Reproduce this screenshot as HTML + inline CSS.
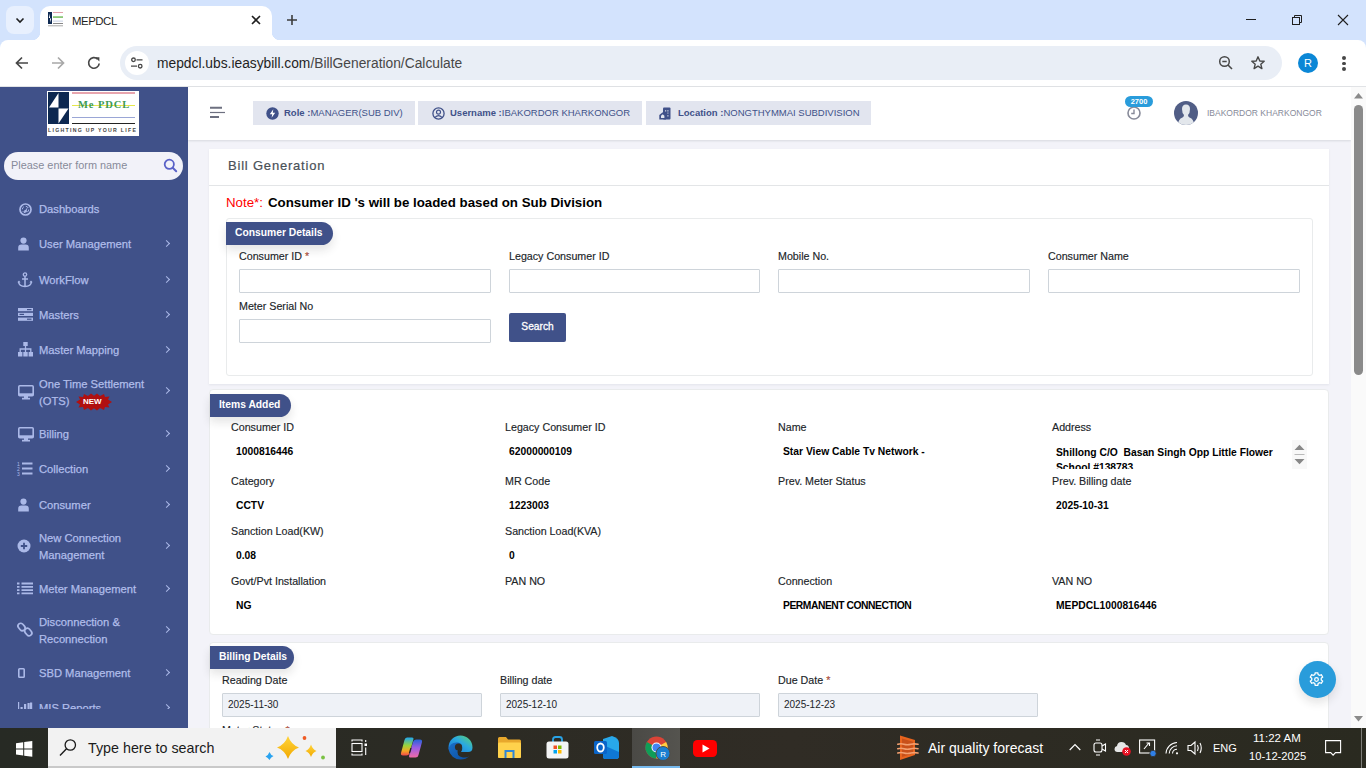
<!DOCTYPE html>
<html><head><meta charset="utf-8">
<style>
*{box-sizing:border-box;margin:0;padding:0}
html,body{width:1366px;height:768px;overflow:hidden;font-family:"Liberation Sans",sans-serif;background:#f3f3f9;position:relative}
.a{position:absolute;white-space:nowrap}
svg{position:absolute;overflow:visible}
#tabstrip{position:absolute;left:0;top:0;width:1366px;height:56px;background:#d3e3fd}
#toolbar{position:absolute;left:0;top:40px;width:1366px;height:46px;background:#fff}
#sep{position:absolute;left:0;top:86px;width:1366px;height:1px;background:#e1e3e6}
#sidebar{position:absolute;left:0;top:87px;width:188px;height:641px;background:#405189;overflow:hidden}
#header{position:absolute;left:188px;top:87px;width:1163px;height:53px;background:#fff;box-shadow:0 1px 2px rgba(56,65,74,.15)}
#vscroll{position:absolute;left:1351px;top:87px;width:15px;height:641px;background:#fafafa}
#taskbar{position:absolute;left:0;top:728px;width:1366px;height:40px;background:linear-gradient(90deg,#272a24 0%,#2c2b24 35%,#302c25 58%,#2d2b23 75%,#2a2a20 100%)}
/* sidebar */
.mi{position:absolute;left:39px;color:#b0bdea;font-size:11.2px;line-height:17px;white-space:nowrap;margin-top:1px;-webkit-text-stroke:0.25px #b0bdea}
.chev{position:absolute;left:164px;width:5px;height:5px;border-right:1.3px solid #abb9e8;border-top:1.3px solid #abb9e8;transform:rotate(45deg)}
/* header pills */
.pill{position:absolute;top:101px;height:24px;background:#e2e5ef}
.pill span{position:absolute;top:6px;font-size:9.5px;line-height:12px;color:#405189;white-space:nowrap}
/* cards */
.card{position:absolute;background:#fff;box-shadow:0 1px 2px rgba(56,65,74,.08)}
.badge{position:absolute;height:23px;background:#405189;border-radius:0 12px 12px 0;box-shadow:0 5px 10px rgba(30,32,37,.12);color:#fff;font-weight:bold;font-size:10.3px;line-height:21px;padding-left:9px;white-space:nowrap}
.lbl{position:absolute;font-size:10.7px;line-height:13px;color:#212529;white-space:nowrap;-webkit-text-stroke:0.15px #212529;margin-top:0.5px}
.val{position:absolute;font-size:10.3px;line-height:13px;color:#000;font-weight:bold;white-space:nowrap}
.inp{position:absolute;height:24px;border:1px solid #ced4da;background:#fff;border-radius:1px}
.inp.ro{background:#eff2f7}
.inp span{position:absolute;left:5px;top:5px;font-size:10px;line-height:12px;color:#212529}
.req{color:#f06548}
</style></head>
<body>
<!-- ============ CHROME ============ -->
<div id="tabstrip"></div>
<div class="a" style="left:6px;top:6px;width:28px;height:28px;border-radius:8px;background:#e8f0fe"></div>
<svg style="left:14px;top:14px" width="12" height="12" viewBox="0 0 12 12"><path d="M2.5 4.5 L6 8 L9.5 4.5" fill="none" stroke="#1f1f1f" stroke-width="1.6"/></svg>
<!-- tab -->
<div class="a" style="left:40px;top:6px;width:232px;height:40px;background:#fff;border-radius:10px 10px 0 0"></div>
<div class="a" style="left:32px;top:32px;width:8px;height:8px;background:radial-gradient(circle at 0 0,#d3e3fd 8px,#fff 8.5px)"></div>
<div class="a" style="left:272px;top:32px;width:8px;height:8px;background:radial-gradient(circle at 100% 0,#d3e3fd 8px,#fff 8.5px)"></div>
<!-- favicon -->
<svg style="left:48px;top:12px" width="16" height="15" viewBox="0 0 16 15"><rect x="0" y="0" width="4" height="12" fill="#0f2a52"/><path d="M2 1.5 L2 6 L0.8 6 Z M2 6.5 L3.2 6.5 L2 10.5 Z" fill="#fff"/><rect x="5" y="0" width="10" height="1" fill="#e3a0aa"/><rect x="5" y="4.2" width="10" height="1.8" fill="#8cc878"/><rect x="5" y="8.5" width="10" height="1.3" fill="#d5dcec"/><rect x="5" y="11" width="10" height="1" fill="#888"/><rect x="0" y="13.3" width="15" height="1" fill="#aaa"/></svg>
<div class="a" style="left:72px;top:12.5px;font-size:11.4px;line-height:16px;color:#1f1f1f;letter-spacing:-0.45px">MEPDCL</div>
<svg style="left:251px;top:15px" width="10" height="10" viewBox="0 0 10 10"><path d="M1 1 L9 9 M9 1 L1 9" stroke="#1f1f1f" stroke-width="1.6"/></svg>
<svg style="left:286px;top:14px" width="12" height="12" viewBox="0 0 12 12"><path d="M6 1 V11 M1 6 H11" stroke="#3c3c3c" stroke-width="1.6"/></svg>
<!-- window controls -->
<div class="a" style="left:1246px;top:19px;width:10px;height:1px;background:#1f1f1f"></div>
<svg style="left:1291px;top:14px" width="12" height="12" viewBox="0 0 12 12"><rect x="1.5" y="3.5" width="7" height="7" fill="none" stroke="#1f1f1f" stroke-width="1"/><path d="M3.5 3.5 V1.5 H10.5 V8.5 H8.5" fill="none" stroke="#1f1f1f" stroke-width="1"/></svg>
<svg style="left:1337px;top:14px" width="12" height="12" viewBox="0 0 12 12"><path d="M1 1 L11 11 M11 1 L1 11" stroke="#1f1f1f" stroke-width="1.1"/></svg>

<div id="toolbar" style="border-radius:8px 8px 0 0"></div>
<div id="sep"></div>
<!-- nav -->
<svg style="left:14px;top:55px" width="16" height="16" viewBox="0 0 16 16"><path d="M14 8 H2.5 M8 2.5 L2.5 8 L8 13.5" fill="none" stroke="#474747" stroke-width="1.7"/></svg>
<svg style="left:50px;top:55px" width="16" height="16" viewBox="0 0 16 16"><path d="M2 8 H13.5 M8 2.5 L13.5 8 L8 13.5" fill="none" stroke="#a8a8a8" stroke-width="1.7"/></svg>
<svg style="left:86px;top:55px" width="16" height="16" viewBox="0 0 16 16"><path d="M13.2 8.5 A5.3 5.3 0 1 1 11.6 4.1" fill="none" stroke="#474747" stroke-width="1.7"/><path d="M9.2 2.2 H13.4 V6.4 Z" fill="#474747"/></svg>
<!-- omnibox -->
<div class="a" style="left:120px;top:46px;width:1162px;height:34px;border-radius:17px;background:#e9eef6"></div>
<div class="a" style="left:125px;top:51px;width:24px;height:24px;border-radius:12px;background:#fff"></div>
<svg style="left:130px;top:56px" width="14" height="14" viewBox="0 0 14 14"><circle cx="3.5" cy="3.8" r="1.8" fill="none" stroke="#474747" stroke-width="1.3"/><path d="M6.5 3.8 H12.5 M1 10.2 H7" stroke="#474747" stroke-width="1.3"/><circle cx="10.2" cy="10.2" r="1.8" fill="none" stroke="#474747" stroke-width="1.3"/></svg>
<div class="a" style="left:157px;top:55px;font-size:13.8px;line-height:18px;color:#1f1f1f">mepdcl.ubs.ieasybill.com<span style="color:#474747">/BillGeneration/Calculate</span></div>
<svg style="left:1218px;top:55px" width="16" height="16" viewBox="0 0 16 16"><circle cx="6.5" cy="6.5" r="4.8" fill="none" stroke="#474747" stroke-width="1.5"/><path d="M4.3 6.5 H8.7 M10 10 L14 14" stroke="#474747" stroke-width="1.6"/></svg>
<svg style="left:1250px;top:55px" width="16" height="16" viewBox="0 0 16 16"><path d="M8 1.8 L9.8 6 L14.2 6.3 L10.8 9.2 L11.9 13.6 L8 11.2 L4.1 13.6 L5.2 9.2 L1.8 6.3 L6.2 6 Z" fill="none" stroke="#474747" stroke-width="1.4" stroke-linejoin="round"/></svg>
<div class="a" style="left:1298px;top:53px;width:20px;height:20px;border-radius:10px;background:#0b87d6;color:#fff;font-size:11px;line-height:20px;text-align:center">R</div>
<div class="a" style="left:1342px;top:56px;width:3.5px;height:3.5px;border-radius:2px;background:#474747"></div>
<div class="a" style="left:1342px;top:61.5px;width:3.5px;height:3.5px;border-radius:2px;background:#474747"></div>
<div class="a" style="left:1342px;top:67px;width:3.5px;height:3.5px;border-radius:2px;background:#474747"></div>

<!-- ============ SIDEBAR ============ -->
<div id="sidebar"></div>
<!-- logo -->
<div class="a" style="left:47px;top:91px;width:92px;height:45px;background:#fff"></div>
<svg style="left:48px;top:92px" width="22" height="33" viewBox="0 0 22 33"><rect x="0" y="0" width="21" height="32" fill="#0d2850"/><path d="M10.5 1 L10.5 15.5 L1 15.5 Z" fill="#fff"/><path d="M10.5 16.5 L20.5 16.5 L10.5 31.5 Z" fill="#fff"/></svg>
<div class="a" style="left:72px;top:92px;width:63px;height:1.5px;background:#e8a5ae"></div>
<div class="a" style="left:72px;top:104.5px;width:63px;height:1.2px;background:#e6e84a"></div>
<div class="a" style="left:78px;top:99px;font-family:'Liberation Serif',serif;font-weight:bold;font-size:10.5px;line-height:12px;color:#3d9a55;letter-spacing:0.9px">Me&nbsp;PDCL</div>
<div class="a" style="left:72px;top:116.5px;width:63px;height:1.2px;background:#9aa6d6"></div>
<div class="a" style="left:72px;top:123px;width:63px;height:1.3px;background:#222"></div>
<div class="a" style="left:48px;top:127px;font-size:5.2px;line-height:6px;color:#444;letter-spacing:1.28px;font-weight:bold">LIGHTING UP YOUR LIFE</div>
<!-- search -->
<div class="a" style="left:4px;top:152px;width:179px;height:28px;border-radius:14px;background:#f2f2f9"></div>
<div class="a" style="left:11px;top:159px;font-size:10.9px;line-height:13px;color:#878a99">Please enter form name</div>
<svg style="left:163px;top:158px" width="15" height="15" viewBox="0 0 15 15"><circle cx="6.3" cy="6.3" r="4.6" fill="none" stroke="#5a62c8" stroke-width="1.8"/><path d="M9.7 9.7 L13.2 13.2" stroke="#5a62c8" stroke-width="2" stroke-linecap="round"/></svg>
<!-- menu -->
<div class="mi" style="top:200px">Dashboards</div>
<div class="mi" style="top:235px">User Management</div><div class="chev" style="top:241px"></div>
<div class="mi" style="top:271px">WorkFlow</div><div class="chev" style="top:277px"></div>
<div class="mi" style="top:306px">Masters</div><div class="chev" style="top:312px"></div>
<div class="mi" style="top:341px">Master Mapping</div><div class="chev" style="top:347px"></div>
<div class="mi" style="top:375px">One Time Settlement</div>
<div class="mi" style="top:392px">(OTS)</div><div class="chev" style="top:388px"></div>
<div class="mi" style="top:425px">Billing</div><div class="chev" style="top:431px"></div>
<div class="mi" style="top:460px">Collection</div><div class="chev" style="top:466px"></div>
<div class="mi" style="top:496px">Consumer</div><div class="chev" style="top:502px"></div>
<div class="mi" style="top:529px">New Connection</div>
<div class="mi" style="top:546px">Management</div><div class="chev" style="top:543px"></div>
<div class="mi" style="top:580px">Meter Management</div><div class="chev" style="top:586px"></div>
<div class="mi" style="top:613px">Disconnection &amp;</div>
<div class="mi" style="top:630px">Reconnection</div><div class="chev" style="top:627px"></div>
<div class="mi" style="top:664px">SBD Management</div><div class="chev" style="top:670px"></div>
<div class="mi" style="top:699px">MIS Reports</div><div class="chev" style="top:705px"></div>
<!-- NEW badge -->
<svg style="left:75px;top:393px" width="38" height="18" viewBox="0 0 38 18"><path d="M1 9 L5 6.5 L3.5 3.5 L8 4 L9 1 L13 3 L16 0.5 L19 2.8 L22 0.5 L25 3 L29 1 L30 4 L34.5 3.5 L33 6.5 L37 9 L33 11.5 L34.5 14.5 L30 14 L29 17 L25 15 L22 17.5 L19 15.2 L16 17.5 L13 15 L9 17 L8 14 L3.5 14.5 L5 11.5 Z" fill="#b01010"/></svg>
<div class="a" style="left:83px;top:397px;font-size:8px;line-height:10px;color:#fff;font-weight:bold">NEW</div>
<!-- icons -->
<svg style="left:19px;top:203px" width="13" height="13" viewBox="0 0 13 13"><circle cx="6.5" cy="6.5" r="5.5" fill="none" stroke="#abb9e8" stroke-width="1.7"/><circle cx="6.5" cy="6.5" r="3.2" fill="none" stroke="#abb9e8" stroke-width="1" stroke-dasharray="3 2"/><path d="M5.6 8.2 L8.8 3.8 L7.4 8.6 Z" fill="#abb9e8"/><circle cx="6.4" cy="8.3" r="1.3" fill="#abb9e8"/></svg>
<svg style="left:18px;top:237px" width="11" height="14" viewBox="0 0 11 14"><circle cx="5.5" cy="3.6" r="3.1" fill="#abb9e8"/><path d="M0.2 13.6 V10.8 Q0.2 7.6 3.4 7.6 H7.6 Q10.8 7.6 10.8 10.8 V13.6 Z" fill="#abb9e8"/></svg>
<svg style="left:17px;top:272px" width="16" height="16" viewBox="0 0 16 16"><circle cx="8" cy="2.6" r="1.7" fill="none" stroke="#abb9e8" stroke-width="1.3"/><path d="M8 4.3 V14.5 M5 7 H11 M1.5 9.5 Q2 14.5 8 14.5 Q14 14.5 14.5 9.5" fill="none" stroke="#abb9e8" stroke-width="1.5"/><path d="M0.5 10.5 L2 8.5 L3.5 10.5 Z M12.5 10.5 L14 8.5 L15.5 10.5Z" fill="#abb9e8"/></svg>
<svg style="left:18px;top:308px" width="15" height="13" viewBox="0 0 15 13"><rect x="0" y="0" width="15" height="3.2" fill="#abb9e8"/><rect x="0" y="4.8" width="15" height="3.2" fill="#abb9e8"/><rect x="0" y="9.6" width="15" height="3.2" fill="#abb9e8"/><rect x="9" y="1" width="4.5" height="1.2" fill="#405189"/><rect x="1.5" y="5.8" width="4.5" height="1.2" fill="#405189"/><rect x="9" y="10.6" width="4.5" height="1.2" fill="#405189"/></svg>
<svg style="left:18px;top:342px" width="15" height="15" viewBox="0 0 15 15"><rect x="5.3" y="0" width="4.4" height="4" fill="#abb9e8"/><path d="M7.5 4 V7 M2.2 10 V7 H12.8 V10 M7.5 7 V10" fill="none" stroke="#abb9e8" stroke-width="1.3"/><rect x="0" y="10" width="4.4" height="4.5" fill="#abb9e8"/><rect x="5.3" y="10" width="4.4" height="4.5" fill="#abb9e8"/><rect x="10.6" y="10" width="4.4" height="4.5" fill="#abb9e8"/></svg>
<svg style="left:18px;top:385px" width="16" height="15" viewBox="0 0 16 15"><rect x="0.8" y="0.8" width="14.4" height="10" rx="1" fill="none" stroke="#abb9e8" stroke-width="1.6"/><rect x="0.8" y="8.3" width="14.4" height="2.5" fill="#abb9e8"/><rect x="6" y="11" width="4" height="2" fill="#abb9e8"/><rect x="4" y="12.8" width="8" height="1.7" fill="#abb9e8"/></svg>
<svg style="left:18px;top:427px" width="16" height="15" viewBox="0 0 16 15"><rect x="0.8" y="0.8" width="14.4" height="10" rx="1" fill="none" stroke="#abb9e8" stroke-width="1.6"/><rect x="0.8" y="8.3" width="14.4" height="2.5" fill="#abb9e8"/><rect x="6" y="11" width="4" height="2" fill="#abb9e8"/><rect x="4" y="12.8" width="8" height="1.7" fill="#abb9e8"/></svg>
<svg style="left:17px;top:461px" width="16" height="15" viewBox="0 0 16 15"><path d="M5 2.5 H15.5 M5 7.5 H15.5 M5 12.5 H15.5" stroke="#abb9e8" stroke-width="1.8"/><text x="0" y="5" font-size="5" fill="#abb9e8" font-family="Liberation Sans">1</text><text x="0" y="10" font-size="5" fill="#abb9e8" font-family="Liberation Sans">2</text><text x="0" y="15" font-size="5" fill="#abb9e8" font-family="Liberation Sans">3</text></svg>
<svg style="left:18px;top:498px" width="11" height="14" viewBox="0 0 11 14"><circle cx="5.5" cy="3.6" r="3.1" fill="#abb9e8"/><path d="M0.2 13.6 V10.8 Q0.2 7.6 3.4 7.6 H7.6 Q10.8 7.6 10.8 10.8 V13.6 Z" fill="#abb9e8"/></svg>
<svg style="left:17px;top:539px" width="14" height="14" viewBox="0 0 14 14"><circle cx="7" cy="7" r="6.5" fill="#abb9e8"/><path d="M7 3.8 V10.2 M3.8 7 H10.2" stroke="#405189" stroke-width="1.8"/></svg>
<svg style="left:17px;top:582px" width="16" height="13" viewBox="0 0 16 13"><path d="M0 1.5 H2.5 M0 4.8 H2.5 M0 8.1 H2.5 M0 11.4 H2.5 M4.5 1.5 H16 M4.5 4.8 H16 M4.5 8.1 H16 M4.5 11.4 H16" stroke="#abb9e8" stroke-width="1.8"/></svg>
<svg style="left:18px;top:622px" width="14" height="15" viewBox="0 0 14 15"><rect x="0.8" y="1" width="5.5" height="8" rx="2.75" transform="rotate(-40 3.5 5)" fill="none" stroke="#abb9e8" stroke-width="1.7"/><rect x="7.5" y="6" width="5.5" height="8" rx="2.75" transform="rotate(-40 10.3 10)" fill="none" stroke="#abb9e8" stroke-width="1.7"/></svg>
<svg style="left:18px;top:668px" width="7" height="10" viewBox="0 0 7 10"><rect x="0.8" y="0.8" width="5.4" height="8.4" rx="0.8" fill="none" stroke="#abb9e8" stroke-width="1.6"/></svg>
<svg style="left:18px;top:701px" width="15" height="12" viewBox="0 0 15 12"><path d="M0.6 1 V12" stroke="#abb9e8" stroke-width="1.2"/><rect x="2.5" y="6" width="2.2" height="6" fill="#abb9e8"/><rect x="6" y="3" width="2.2" height="9" fill="#abb9e8"/><rect x="9.5" y="2" width="2.2" height="10" fill="#abb9e8"/><rect x="12" y="1.5" width="2.2" height="10.5" fill="#abb9e8"/></svg>
<div class="a" style="left:0;top:709px;width:188px;height:19px;background:#405189"></div>

<!-- ============ HEADER ============ -->
<div id="header"></div>
<svg style="left:210px;top:106px" width="16" height="13" viewBox="0 0 16 13"><path d="M0 1.8 H12 M0 11 H9" stroke="#6d7080" stroke-width="1.9"/><path d="M0 6.5 H15" stroke="#6d7080" stroke-width="1.2"/></svg>
<div class="pill" style="left:253px;width:162px"></div>
<svg style="left:266px;top:107px" width="13" height="13" viewBox="0 0 13 13"><circle cx="6.5" cy="6.5" r="6.2" fill="#405189"/><path d="M7.3 2.3 L3.8 7.2 H6.2 L5.6 10.7 L9.2 5.8 H6.8 Z" fill="#fff"/></svg>
<div class="a" style="left:284px;top:107px;font-size:9.5px;line-height:12px;color:#405189"><b>Role :</b>MANAGER(SUB DIV)</div>
<div class="pill" style="left:418px;width:224px"></div>
<svg style="left:432px;top:107px" width="13" height="13" viewBox="0 0 13 13"><circle cx="6.5" cy="6.5" r="5.6" fill="none" stroke="#405189" stroke-width="1.3"/><circle cx="6.5" cy="5.2" r="2" fill="none" stroke="#405189" stroke-width="1.2"/><path d="M3 10.3 Q6.5 6.8 10 10.3" fill="none" stroke="#405189" stroke-width="1.2"/></svg>
<div class="a" style="left:450px;top:107px;font-size:9.5px;line-height:12px;color:#405189"><b>Username :</b>IBAKORDOR KHARKONGOR</div>
<div class="pill" style="left:646px;width:225px"></div>
<svg style="left:659px;top:107px" width="12" height="13" viewBox="0 0 12 13"><rect x="4" y="0.5" width="7.5" height="12" rx="1" fill="#405189"/><rect x="6" y="3" width="1.2" height="1.6" fill="#e2e5ef" opacity="0.7"/><rect x="8.3" y="3" width="1.2" height="1.6" fill="#e2e5ef" opacity="0.7"/><rect x="8.3" y="5.5" width="1.2" height="1.2" fill="#e2e5ef" opacity="0.7"/><rect x="8.3" y="8" width="1.2" height="1.6" fill="#e2e5ef" opacity="0.7"/><path d="M0.3 8 L3.8 5.2 L7 8 V12.5 H0.3 Z" fill="#405189"/><path d="M2 8.8 L3.8 7.3 L5.4 8.8 V11 H2 Z" fill="#e2e5ef"/></svg>
<div class="a" style="left:678px;top:107px;font-size:9.5px;line-height:12px;color:#405189"><b>Location :</b>NONGTHYMMAI SUBDIVISION</div>
<!-- clock + badge -->
<svg style="left:1127px;top:106px" width="14" height="14" viewBox="0 0 14 14"><circle cx="7" cy="7" r="6" fill="none" stroke="#878a99" stroke-width="1.6"/><path d="M7 3.5 V7.5 H4.2" fill="none" stroke="#878a99" stroke-width="1.4"/></svg>
<div class="a" style="left:1125px;top:96px;width:28px;height:11px;border-radius:6px;background:#299cdb;color:#fff;font-size:7.5px;line-height:11px;font-weight:bold;text-align:center">2700</div>
<svg style="left:1174px;top:101px" width="24" height="24" viewBox="0 0 24 24"><defs><clipPath id="av"><circle cx="12" cy="12" r="12"/></clipPath></defs><circle cx="12" cy="12" r="12" fill="#515e86"/><g clip-path="url(#av)"><path d="M8 8 Q8 3.5 12 3.5 Q16 3.5 16 8 Q16 12 14 14 Q14 15.5 15.5 16.5 Q20 18 20 24 H4 Q4 18 8.5 16.5 Q10 15.5 10 14 Q8 12 8 8 Z" fill="#e3e7ec"/></g></svg>
<div class="a" style="left:1207px;top:107px;font-size:8.5px;line-height:12px;color:#878a99">IBAKORDOR KHARKONGOR</div>

<!-- ============ CONTENT ============ -->
<!-- card 1 -->
<div class="card" style="left:209px;top:149px;width:1120px;height:235px"></div>
<div class="a" style="left:209px;top:185px;width:1120px;height:1px;background:#e3e5e7"></div>
<div class="a" style="left:228px;top:158px;font-size:13px;line-height:16px;color:#495057;letter-spacing:0.8px;-webkit-text-stroke:0.2px #495057">Bill Generation</div>
<div class="a" style="left:226px;top:195px;font-size:13.3px;line-height:16px;color:#f00">Note*:</div><div class="a" style="left:268px;top:195px;font-size:13.3px;line-height:16px;color:#000;font-weight:bold">Consumer ID 's will be loaded based on Sub Division</div>
<div class="a" style="left:226px;top:218px;width:1087px;height:158px;border:1px solid #e9ebec;border-radius:3px"></div>
<div class="badge" style="left:226px;top:222px;width:107px">Consumer Details</div>
<div class="lbl" style="left:239px;top:249px">Consumer ID <span class="req">*</span></div>
<div class="lbl" style="left:509px;top:249px">Legacy Consumer ID</div>
<div class="lbl" style="left:778px;top:249px">Mobile No.</div>
<div class="lbl" style="left:1048px;top:249px">Consumer Name</div>
<div class="inp" style="left:239px;top:269px;width:252px"></div>
<div class="inp" style="left:509px;top:269px;width:251px"></div>
<div class="inp" style="left:778px;top:269px;width:252px"></div>
<div class="inp" style="left:1048px;top:269px;width:252px"></div>
<div class="lbl" style="left:239px;top:299px">Meter Serial No</div>
<div class="inp" style="left:239px;top:319px;width:252px"></div>
<div class="a" style="left:509px;top:313px;width:57px;height:29px;border-radius:2px;background:#405189;color:#fff;font-size:10.2px;line-height:28px;text-align:center;-webkit-text-stroke:0.3px #fff">Search</div>

<!-- card 2 -->
<div class="card" style="left:209px;top:389px;width:1120px;height:246px;border:1px solid #e9ebec;border-radius:4px;box-shadow:none"></div>
<div class="badge" style="left:210px;top:394px;width:81px">Items Added</div>
<div class="lbl" style="left:231px;top:420px">Consumer ID</div>
<div class="val" style="left:236px;top:445px">1000816446</div>
<div class="lbl" style="left:505px;top:420px">Legacy Consumer ID</div>
<div class="val" style="left:509px;top:445px">62000000109</div>
<div class="lbl" style="left:778px;top:420px">Name</div>
<div class="val" style="left:783px;top:445px">Star View Cable Tv Network -</div>
<div class="lbl" style="left:1052px;top:420px">Address</div>
<div class="a" style="left:1052px;top:440px;width:230px;height:29px;overflow:hidden"><div class="val" style="left:4px;top:5px;line-height:15px">Shillong C/O&nbsp; Basan Singh Opp Little Flower<br>School #138783</div></div>
<div class="a" style="left:1292px;top:440px;width:15px;height:29px;background:#f8f8f8"></div>
<svg style="left:1294px;top:444px" width="11" height="21" viewBox="0 0 11 21"><path d="M0.5 6 L5.5 0.8 L10.5 6 Z M0.5 15 L10.5 15 L5.5 20.2 Z" fill="#888"/><path d="M0.5 10.5 H10.5" stroke="#aaa" stroke-width="0.8"/></svg>
<div class="lbl" style="left:231px;top:474px">Category</div>
<div class="val" style="left:236px;top:499px">CCTV</div>
<div class="lbl" style="left:505px;top:474px">MR Code</div>
<div class="val" style="left:509px;top:499px">1223003</div>
<div class="lbl" style="left:778px;top:474px">Prev. Meter Status</div>
<div class="lbl" style="left:1052px;top:474px">Prev. Billing date</div>
<div class="val" style="left:1056px;top:499px">2025-10-31</div>
<div class="lbl" style="left:231px;top:524px">Sanction Load(KW)</div>
<div class="val" style="left:236px;top:549px">0.08</div>
<div class="lbl" style="left:505px;top:524px">Sanction Load(KVA)</div>
<div class="val" style="left:509px;top:549px">0</div>
<div class="lbl" style="left:231px;top:574px">Govt/Pvt Installation</div>
<div class="val" style="left:236px;top:599px">NG</div>
<div class="lbl" style="left:505px;top:574px">PAN NO</div>
<div class="lbl" style="left:778px;top:574px">Connection</div>
<div class="val" style="left:783px;top:599px;letter-spacing:-0.45px">PERMANENT CONNECTION</div>
<div class="lbl" style="left:1052px;top:574px">VAN NO</div>
<div class="val" style="left:1056px;top:599px">MEPDCL1000816446</div>

<!-- card 3 -->
<div class="card" style="left:209px;top:642px;width:1120px;height:100px;border:1px solid #e9ebec;border-radius:4px;box-shadow:none"></div>
<div class="badge" style="left:210px;top:646px;width:84px">Billing Details</div>
<div class="lbl" style="left:222px;top:673px">Reading Date</div>
<div class="lbl" style="left:500px;top:673px">Billing date</div>
<div class="lbl" style="left:778px;top:673px">Due Date <span class="req">*</span></div>
<div class="inp ro" style="left:222px;top:693px;width:260px"><span>2025-11-30</span></div>
<div class="inp ro" style="left:500px;top:693px;width:260px"><span>2025-12-10</span></div>
<div class="inp ro" style="left:778px;top:693px;width:260px"><span>2025-12-23</span></div>
<div class="lbl" style="left:222px;top:723px">Meter Status <span class="req">*</span></div>
<!-- settings fab -->
<div class="a" style="left:1299px;top:661px;width:37px;height:37px;border-radius:50%;background:#299cdb;box-shadow:0 5px 10px rgba(30,32,37,.12)"></div>
<svg style="left:1308px;top:671px" width="17" height="17" viewBox="0 0 24 24"><path fill="#fff" d="M12 8.5a3.5 3.5 0 1 0 0 7 3.5 3.5 0 0 0 0-7zm0 5.2a1.7 1.7 0 1 1 0-3.4 1.7 1.7 0 0 1 0 3.4z"/><path fill="none" stroke="#fff" stroke-width="1.8" d="M10.2 2.5h3.6l.6 2.6 1.9 1.1 2.6-.8 1.8 3.1-2 1.8v2.2l2 1.8-1.8 3.1-2.6-.8-1.9 1.1-.6 2.6h-3.6l-.6-2.6-1.9-1.1-2.6.8-1.8-3.1 2-1.8v-2.2l-2-1.8 1.8-3.1 2.6.8 1.9-1.1z"/></svg>

<!-- ============ SCROLLBAR ============ -->
<div id="vscroll"></div>
<svg style="left:1354px;top:93px" width="9" height="6" viewBox="0 0 9 6"><path d="M0 5.5 L4.5 0 L9 5.5 Z" fill="#8a8a8a"/></svg>
<div class="a" style="left:1354px;top:105px;width:9px;height:270px;border-radius:4.5px;background:#8a8a8a"></div>
<svg style="left:1354px;top:716px" width="9" height="6" viewBox="0 0 9 6"><path d="M0 0 L9 0 L4.5 5.5 Z" fill="#8a8a8a"/></svg>

<!-- ============ TASKBAR ============ -->
<div id="taskbar"></div>
<svg style="left:16px;top:741px" width="17" height="16" viewBox="0 0 17 16"><path d="M0 2.3 L7.2 1.3 V7.4 H0 Z M8.2 1.1 L16.3 0 V7.4 H8.2 Z M0 8.4 H7.2 V14.6 L0 13.6 Z M8.2 8.4 H16.3 V15.8 L8.2 14.7 Z" fill="#fff"/></svg>
<div class="a" style="left:48px;top:728px;width:288px;height:40px;background:#f2f2f2;border-bottom:2px solid #c9c9c9"></div>
<svg style="left:58px;top:738px" width="19" height="19" viewBox="0 0 19 19"><circle cx="12.3" cy="7" r="5.2" fill="none" stroke="#1a1a1a" stroke-width="1.3"/><path d="M8.5 10.8 L2 17.5" stroke="#1a1a1a" stroke-width="1.4"/></svg>
<div class="a" style="left:88px;top:739px;font-size:14.3px;line-height:19px;color:#1b1b1b">Type here to search</div>
<svg style="left:262px;top:734px" width="66" height="30" viewBox="0 0 66 30"><defs><linearGradient id="gy" x1="0" y1="0" x2="0" y2="1"><stop offset="0" stop-color="#ffd43b"/><stop offset="1" stop-color="#f2a900"/></linearGradient></defs>
<path d="M26 2 Q29 10.5 37 13.5 Q29 16.5 26 25 Q23 16.5 15 13.5 Q23 10.5 26 2 Z" fill="url(#gy)"/>
<path d="M49 10.5 Q50.5 15.2 54.5 17 Q50.5 18.6 49 23 Q47.5 18.6 43.5 17 Q47.5 15.2 49 10.5 Z" fill="url(#gy)"/>
<path d="M7.5 18 Q8.5 21 11.5 22 Q8.5 23.5 7.5 26 Q6 23.5 3.5 22.5 Q6.5 21 7.5 18 Z" fill="#29a3f0"/>
<circle cx="42.5" cy="4" r="1.9" fill="#ef5b25"/><circle cx="61" cy="23.5" r="1.9" fill="#7ac143"/></svg>
<!-- task view -->
<svg style="left:351px;top:739px" width="18" height="17" viewBox="0 0 18 17"><path d="M1 2.5 V1 H11 V2.5 M1 14.5 V16 H11 V14.5" fill="none" stroke="#fff" stroke-width="1.1"/><rect x="1" y="4.5" width="10" height="8" fill="none" stroke="#fff" stroke-width="1.1"/><rect x="13.5" y="4.5" width="2.5" height="2.5" fill="#fff"/><path d="M14.7 1 V3 M14.7 8.5 V16" stroke="#fff" stroke-width="1.1"/></svg>
<!-- copilot -->
<svg style="left:400px;top:737px" width="23" height="21" viewBox="0 0 23 21"><defs><linearGradient id="cpa" x1="0" y1="0" x2="0" y2="1"><stop offset="0" stop-color="#1fa8f0"/><stop offset="0.45" stop-color="#9ad43a"/><stop offset="0.75" stop-color="#f5a623"/><stop offset="1" stop-color="#f0474a"/></linearGradient><linearGradient id="cpb" x1="0" y1="0" x2="0" y2="1"><stop offset="0" stop-color="#2563d8"/><stop offset="0.45" stop-color="#9b5de5"/><stop offset="1" stop-color="#f06aa8"/></linearGradient></defs>
<path d="M7 0.5 H12 Q14 0.5 13.3 2.8 L9.5 16 Q8.8 18.5 6.5 18.5 H3 Q0.5 18.5 1 16 L4.5 3 Q5 0.5 7 0.5 Z" fill="url(#cpa)"/>
<path d="M16 2.5 H20 Q22.5 2.5 22 5 L18.5 18 Q18 20.5 15.5 20.5 H10.5 Q8.5 20.5 9.2 18.2 L13 5 Q13.7 2.5 16 2.5 Z" fill="url(#cpb)"/>
<path d="M9.5 16 L11 11" stroke="#222" stroke-width="1.3"/></svg>
<!-- edge -->
<svg style="left:448px;top:735px" width="25" height="25" viewBox="0 0 25 25"><defs><linearGradient id="ed1" x1="1" y1="0" x2="0" y2="1"><stop offset="0" stop-color="#5fd66a"/><stop offset="0.45" stop-color="#2aa9e0"/><stop offset="1" stop-color="#1a73d6"/></linearGradient><linearGradient id="ed2" x1="0" y1="0" x2="1" y2="1"><stop offset="0" stop-color="#1a6fc9"/><stop offset="1" stop-color="#0b4ea0"/></linearGradient></defs>
<path d="M12.5 0.5 A12 12 0 0 1 24.5 12.5 Q24.5 17 20 17 H13 Q16 12 12 9.5 Q7 7 3 11 Q1 13 0.6 14.5 Q0.5 13.5 0.5 12.5 A12 12 0 0 1 12.5 0.5 Z" fill="url(#ed1)"/>
<path d="M0.6 14.5 Q2 6.5 10 7.5 Q15 8.5 14 13 Q12.5 16.5 10 14.5 Q7.5 21 15 22.5 Q19 23 21.5 21 Q18 24.5 12.5 24.5 A12 12 0 0 1 0.6 14.5 Z" fill="url(#ed2)"/>
<circle cx="10.5" cy="12" r="3.6" fill="#302c25"/></svg>
<!-- explorer -->
<svg style="left:498px;top:737px" width="23" height="21" viewBox="0 0 23 21"><path d="M0 1.5 Q0 0 1.5 0 H8 L10 2.5 H21.5 Q23 2.5 23 4 V19.5 Q23 21 21.5 21 H1.5 Q0 21 0 19.5 Z" fill="#e8a82c"/><rect x="0" y="5.5" width="23" height="15.5" rx="1.3" fill="#ffd24c"/><rect x="6.5" y="13" width="10" height="8" fill="#2f86d6"/><rect x="8.5" y="15" width="6" height="6" fill="#ffd24c"/></svg>
<!-- store -->
<svg style="left:546px;top:736px" width="23" height="23" viewBox="0 0 23 23"><path d="M7 6 V3.5 Q7 1 9.5 1 H13.5 Q16 1 16 3.5 V6" fill="none" stroke="#29a3e6" stroke-width="1.8"/><rect x="0.5" y="5.5" width="22" height="17" rx="2.5" fill="#f4f4f4"/><rect x="7.5" y="9.5" width="3.5" height="3.5" fill="#f25022"/><rect x="12" y="9.5" width="3.5" height="3.5" fill="#7fba00"/><rect x="7.5" y="14" width="3.5" height="3.5" fill="#00a4ef"/><rect x="12" y="14" width="3.5" height="3.5" fill="#ffb900"/></svg>
<!-- outlook -->
<svg style="left:594px;top:736px" width="26" height="23" viewBox="0 0 26 23"><path d="M9 3 L18 0 Q25 2 25 7 V20 Q25 23 22 23 H11 Q9 23 9 20 Z" fill="#28a8ea"/><path d="M9 9 L25 16 V20 Q25 23 22 23 H11 Q9 23 9 20 Z" fill="#0f78d4"/><rect x="0" y="5" width="13" height="13" rx="1.5" fill="#0a64c8"/><ellipse cx="6.5" cy="11.5" rx="3.3" ry="4" fill="none" stroke="#fff" stroke-width="1.8"/></svg>
<!-- chrome (active) -->
<div class="a" style="left:632px;top:728px;width:48px;height:40px;background:linear-gradient(90deg,#4a4945,#55544f)"></div>
<div class="a" style="left:632px;top:766px;width:48px;height:2px;background:#76b9ed"></div>
<svg style="left:645px;top:736px" width="25" height="25" viewBox="0 0 25 25"><circle cx="11.5" cy="11.5" r="11" fill="#db4437"/><path d="M11.5 11.5 L1.9 6 A11 11 0 0 0 11.5 22.5 Z" fill="#0f9d58"/><path d="M11.5 11.5 L21.1 6 A11 11 0 0 1 11.5 22.5 Z" fill="#ffcd40"/><circle cx="11.5" cy="11.5" r="5" fill="#fff"/><circle cx="11.5" cy="11.5" r="4" fill="#4285f4"/><circle cx="18" cy="17.5" r="7" fill="#1a7fd1" stroke="#4f4e4a" stroke-width="1"/><text x="15.3" y="21" font-size="8" fill="#fff" font-family="Liberation Sans">R</text></svg>
<!-- youtube -->
<svg style="left:693px;top:740px" width="24" height="17" viewBox="0 0 24 17"><rect x="0" y="0" width="24" height="17" rx="4.5" fill="#ff0000"/><path d="M9.5 4.5 L16.5 8.5 L9.5 12.5 Z" fill="#fff"/></svg>
<!-- air quality -->
<svg style="left:897px;top:735px" width="22" height="26" viewBox="0 0 22 26"><path d="M3 0.5 L18 5 V20 L3 25 Z" fill="#e8641e"/><path d="M5 3.5 L16 6.8 V18.5 L5 22 Z" fill="#c8501a"/><path d="M0.8 9.3 Q4 8.3 7 9.3 Q10 10.3 14 9.3 Q17 8.5 21 9.3 M0.8 13.7 Q4 12.7 7 13.7 Q10 14.7 14 13.7 Q17 12.9 21 13.7 M0.8 18 Q4 17 7 18 Q10 19 14 18 Q17 17.2 21 18" fill="none" stroke="#f4a070" stroke-width="1.6" stroke-linecap="round"/></svg>
<div class="a" style="left:928px;top:739px;font-size:14px;line-height:19px;color:#fff">Air quality forecast</div>
<svg style="left:1069px;top:743px" width="12" height="8" viewBox="0 0 12 8"><path d="M0.7 7 L6 1.5 L11.3 7" fill="none" stroke="#fff" stroke-width="1.2"/></svg>
<svg style="left:1093px;top:739px" width="14" height="17" viewBox="0 0 14 17"><rect x="1" y="4" width="8" height="9" rx="2" fill="none" stroke="#fff" stroke-width="1.1"/><path d="M9 7 L12.5 5 V12 L9 10" fill="none" stroke="#fff" stroke-width="1.1"/><path d="M3 1 H7 M3 16 H7" stroke="#fff" stroke-width="1.1"/></svg>
<svg style="left:1114px;top:740px" width="18" height="16" viewBox="0 0 18 16"><path d="M3.5 12 Q0.5 12 0.5 9 Q0.5 6.5 3 6 Q3.5 2 7.5 2 Q11 2 12 5 Q15 5 15 8.5 Q15 12 12 12 Z" fill="#e6e6e6"/><circle cx="12.5" cy="11.5" r="4.3" fill="#e81123"/><path d="M11 10 L14 13 M14 10 L11 13" stroke="#fff" stroke-width="1"/></svg>
<svg style="left:1139px;top:739px" width="18" height="18" viewBox="0 0 18 18"><rect x="0.6" y="1" width="15" height="13" fill="none" stroke="#fff" stroke-width="1.1"/><path d="M5 10 L10 4 M7.5 4 H10.5 V7" fill="none" stroke="#fff" stroke-width="1.1"/><circle cx="14" cy="14.5" r="3.2" fill="#2f7fe6" stroke="#302c25" stroke-width="0.8"/></svg>
<svg style="left:1165px;top:740px" width="15" height="15" viewBox="0 0 15 15"><path d="M1 13.5 A11.5 11.5 0 0 1 12 2.5 M4.2 13.5 A8 8 0 0 1 12 5.8 M7.5 13.5 A4.5 4.5 0 0 1 12 9.2" fill="none" stroke="#fff" stroke-width="1.1"/><circle cx="12" cy="13.3" r="1.1" fill="#fff"/></svg>
<svg style="left:1187px;top:740px" width="17" height="16" viewBox="0 0 17 16"><path d="M1 5.5 H4 L8 2 V14 L4 10.5 H1 Z" fill="none" stroke="#fff" stroke-width="1.1"/><path d="M10.5 5 Q12 8 10.5 11 M13 3 Q15.5 8 13 13" fill="none" stroke="#fff" stroke-width="1.1"/></svg>
<div class="a" style="left:1213px;top:741px;font-size:11px;line-height:14px;color:#fff">ENG</div>
<div class="a" style="left:1253px;top:731px;font-size:11.5px;line-height:15px;color:#fff">11:22 AM</div>
<div class="a" style="left:1249px;top:749px;font-size:11.2px;line-height:15px;color:#fff">10-12-2025</div>
<div class="a" style="left:1361px;top:728px;width:1px;height:40px;background:#7d7d78"></div>
<svg style="left:1325px;top:740px" width="17" height="17" viewBox="0 0 17 17"><path d="M0.6 0.6 H15.6 V12.6 H10.5 L8.1 15.2 L5.7 12.6 H0.6 Z" fill="none" stroke="#fff" stroke-width="1.1" stroke-linejoin="miter"/></svg>
</body></html>
